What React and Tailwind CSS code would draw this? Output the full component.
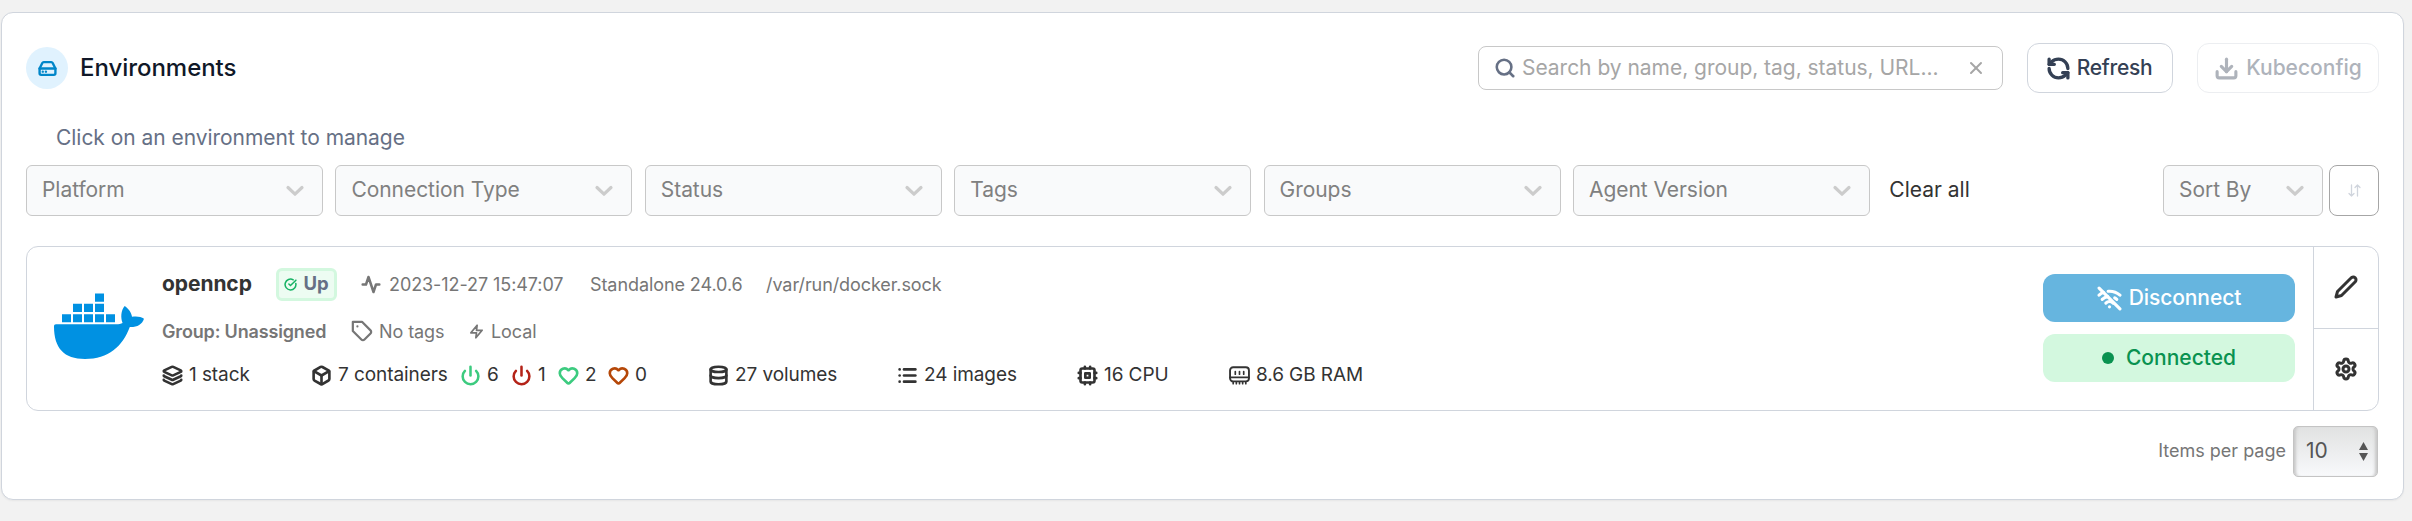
import {
  HardDrive, Search, X, RefreshCcw, Download, Layers, Box, Power, Heart,
  Database, List, WifiOff, Settings, CircleCheckBig,
} from "lucide-react";

function Filter({ label, className = "w-[297px]" }) {
  return (
    <div className={`flex h-[51px] items-center justify-between rounded-md border border-[#c8c8c8] bg-[#f9fafb] pl-[15px] pr-[17px] text-[21px] tracking-[-0.05px] text-[#808080] ${className}`}>
      <span className="relative -top-px">{label}</span>
      <svg className="h-[12px] w-[20px]" viewBox="0 0 20 12" fill="none" stroke="#ccc" strokeWidth="3.2" strokeLinecap="round" strokeLinejoin="round">
        <path d="M3 2.5 10 9.2 17 2.5" />
      </svg>
    </div>
  );
}

function DockerLogo() {
  return (
    <svg className="h-[66px] w-[90px]" viewBox="0 0 90 66" fill="#0091e2">
      <path d="M41 .5h9v8.2h-9zM19 10.8h9v8.2h-9zM30 10.8h9v8.2h-9zM41 10.8h9v8.2h-9zM8 21.2h9v8h-9zM19 21.2h9v8h-9zM30 21.2h9v8h-9zM41 21.2h9v8h-9zM52 21.2h9v8h-9z" />
      <path d="M2 31.3H62C65 31.3 67 30.8 68.600 30C66.500 24.500 66.800 17.500 70.700 13C74.500 15.500 77.500 19.500 78 23.800C82.500 23 87 23.600 90 25.700C88 31.500 83 34.300 75.800 34C68.500 53.500 54.500 66 31 66C10 66 0 55 0 33.500C0 32 .7 31.300 2 31.300Z" />
    </svg>
  );
}

// Line icon on a 24-unit grid, for shapes drawn by hand.
function Glyph({ className = "", strokeWidth, children }) {
  return (
    <svg className={`shrink-0 ${className}`} viewBox="0 0 24 24" fill="none" stroke="currentColor" strokeWidth={strokeWidth} strokeLinecap="round" strokeLinejoin="round">
      {children}
    </svg>
  );
}

function CpuIcon() {
  return (
    <Glyph className="h-[21px] w-[21px]" strokeWidth="3">
      <rect x="4" y="4" width="16" height="16" rx="2" />
      <rect x="9.500" y="9.500" width="5" height="5" />
      <path d="M15 2v2M15 20v2M2 15h2M2 9h2M20 15h2M20 9h2M9 2v2M9 20v2" />
    </Glyph>
  );
}

function RamIcon() {
  return (
    <svg className="h-[21px] w-[21px]" viewBox="0 0 20 20" fill="none" stroke="currentColor" strokeLinecap="round" strokeLinejoin="round">
      <rect x="1" y="2.200" width="18" height="13.400" rx="3" strokeWidth="1.800" />
      <path d="M1 11.800h18" strokeWidth="1.700" />
      <path d="M6 6.300v2.400M10 6.300v2.400M14 6.300v2.400" strokeWidth="1.600" />
      <path d="M4 16v1.800M7 16v1.800M10 16v1.800M13 16v1.800M16 16v1.800" strokeWidth="1.600" />
    </svg>
  );
}

function Stat({ icon, children, className = "" }) {
  return (
    <div className={`flex items-center gap-[6px] ${className}`}>
      {icon}
      <span className="whitespace-nowrap">{children}</span>
    </div>
  );
}

export default function App() {
  return (
    <div className="h-[521px] w-[2412px] bg-[#f2f2f2] pl-px pt-[12px] font-[Inter,sans-serif]">
      <section className="flex h-[488px] w-[2403px] flex-col rounded-xl border border-[#d0d5dd] bg-white pl-[24px] pr-[24px] shadow-xs">
        <header className="flex h-[110px] items-start pt-[30px]">
          <div className="mt-[4px] flex h-[42px] w-[42px] items-center justify-center rounded-full bg-[#e0f2fe] text-[#0086c9]">
            <HardDrive size={19} strokeWidth={3} />
          </div>
          <h1 className="ml-[12px] mt-[7px] text-[24px] font-medium leading-[36px] tracking-[-0.04px] text-[#101828]">Environments</h1>
          <div className="ml-auto mt-[3px] flex h-[44px] w-[525px] items-center rounded-lg border border-[#c8c8c8] pl-[15px] pr-[16px] text-[21px] text-[#a6a6a6]">
            <Search size={22} strokeWidth={2.800} className="mr-[6px] text-[#667085]" />
            <span className="tracking-[-0.03px]">Search by name, group, tag, status, URL...</span>
            <X size={20} strokeWidth={2.400} className="ml-auto" />
          </div>
          <button className="ml-[24px] flex h-[50px] w-[146px] items-center justify-center gap-[6px] rounded-xl border border-[#d0d5dd] pr-[2px] text-[21px] font-medium tracking-[-0.3px] text-[#344054]">
            <RefreshCcw size={25} strokeWidth={3.200} />
            Refresh
          </button>
          <button className="ml-[24px] flex h-[50px] w-[182px] items-center justify-center gap-[7px] rounded-xl border border-[#eceef1] text-[21px] font-medium text-[#aeb3bb]">
            <Download size={25} strokeWidth={3} />
            Kubeconfig
          </button>
        </header>
        <p className="h-[42px] pl-[30px] text-[21px] leading-[30px] tracking-[-0.04px] text-[#667085]">Click on an environment to manage</p>
        <div className="flex items-center gap-[12.400px]">
          <Filter label="Platform" />
          <Filter label="Connection Type" />
          <Filter label="Status" />
          <Filter label="Tags" />
          <Filter label="Groups" />
          <Filter label="Agent Version" />
          <span className="relative -top-px ml-[7px] text-[21px] text-[#333]">Clear all</span>
          <div className="ml-auto flex gap-[6px]">
            <Filter label="Sort By" className="w-[160px]" />
            <button className="flex h-[51px] w-[50px] items-center justify-center rounded-lg border border-[#a6a6a6] text-[#d0d5dd]">
              <svg className="h-[13px] w-[13px]" viewBox="0 0 13 13" fill="none" stroke="currentColor" strokeWidth="1.300" strokeLinecap="round" strokeLinejoin="round">
                <path d="M3.500 1v11M1 9.500 3.500 12 6 9.500M9.500 12V1M7 3.500 9.500 1 12 3.500" />
              </svg>
            </button>
          </div>
        </div>
        <div className="mt-[30px] flex h-[165px] shrink-0 overflow-hidden rounded-xl border border-[#d0d5dd]">
          <div className="flex flex-1">
            <div className="ml-[27px] mt-[46px] w-[90px]"><DockerLogo /></div>
            <div className="ml-[18px] flex flex-col text-[18px] tracking-[-0.08px] text-[#767676]">
              <div className="mt-[20px] flex h-[34px] items-center">
                <span className="w-[114px] text-[21px] font-bold text-[#333]">openncp</span>
                <span className="flex h-[33px] w-[61px] items-center justify-center gap-[6px] rounded-md border-[3px] border-[#d3f8df] bg-[#edfcf2] text-[18.500px] font-bold text-[#667085]">
                  <CircleCheckBig size={13} strokeWidth={2.800} className="text-[#16b364]" />
                  Up
                </span>
                <Glyph className="ml-[24px] mr-[8px] h-[21px] w-[20px]" strokeWidth="3">
                  <path d="M22 12h-4l-3 9L9 3l-3 9H2" />
                </Glyph>
                <span className="w-[201px]">2023-12-27 15:47:07</span>
                <span className="w-[176px]">Standalone 24.0.6</span>
                <span>/var/run/docker.sock</span>
              </div>
              <div className="mt-[13px] flex h-[34px] items-center">
                <span className="w-[189px] font-semibold tracking-[-0.16px]">Group: Unassigned</span>
                <Glyph className="mr-[6px] h-[22px] w-[22px]" strokeWidth="2.400">
                  <path d="M12 2H2v10l9.290 9.290c.94.94 2.480.94 3.420 0l6.580-6.580c.94-.94.94-2.480 0-3.420L12 2Z" />
                  <path d="M7 7h.01" />
                </Glyph>
                <span className="w-[90px]">No tags</span>
                <Glyph className="mr-[7px] h-[15px] w-[15px]" strokeWidth="2.800">
                  <path d="M13 2 3 14h9l-1 8 10-12h-9l1-8z" />
                </Glyph>
                <span>Local</span>
              </div>
              <div className="mt-[10px] flex h-[34px] items-center text-[19px] text-[#333]">
                <Stat className="w-[149px]" icon={<Layers size={21} strokeWidth={3} />}>1 stack</Stat>
                <Stat className="w-[149px]" icon={<Box size={21} strokeWidth={3} />}>7 containers</Stat>
                <Stat className="w-[51px]" icon={<Power size={21} strokeWidth={2.900} className="text-[#3ccb7f]" />}>6</Stat>
                <Stat className="w-[47px]" icon={<Power size={21} strokeWidth={2.900} className="text-[#b42318]" />}>1</Stat>
                <Stat className="w-[50px]" icon={<Heart size={21} strokeWidth={3} className="text-[#3ccb7f]" />}>2</Stat>
                <Stat className="w-[100px]" icon={<Heart size={21} strokeWidth={3} className="text-[#b54708]" />}>0</Stat>
                <Stat className="w-[189px]" icon={<Database size={21} strokeWidth={3} />}>27 volumes</Stat>
                <Stat className="w-[180px]" icon={<List size={21} strokeWidth={3} />}>24 images</Stat>
                <Stat className="w-[152px]" icon={<CpuIcon />}>16 CPU</Stat>
                <Stat icon={<RamIcon />}>8.6 GB RAM</Stat>
              </div>
            </div>
            <div className="ml-auto mr-[18px] mt-[27px] flex w-[252px] flex-col gap-[12px] text-[21px] font-medium">
              <button className="flex h-[48px] items-center justify-center gap-[7px] rounded-xl bg-[#66b5df] tracking-[-0.1px] text-white">
                <WifiOff size={25} strokeWidth={3} />
                Disconnect
              </button>
              <div className="flex h-[48px] items-center justify-center gap-[12px] rounded-xl bg-[#d3f8df] text-[#099250]">
                <span className="h-[12px] w-[12px] rounded-full bg-[#099250]" />
                Connected
              </div>
            </div>
          </div>
          <div className="flex w-[65px] flex-col border-l border-[#d0d5dd] text-[#333]">
            <div className="flex h-[82px] items-center justify-center border-b border-[#d0d5dd] pb-[2px]">
              <Glyph className="h-[24px] w-[24px]" strokeWidth="3">
                <path d="M17 3a2.850 2.830 0 1 1 4 4L7.500 20.500 2 22l1.500-5.500Z" />
              </Glyph>
            </div>
            <div className="flex flex-1 items-center justify-center pb-px"><Settings size={24} strokeWidth={3} /></div>
          </div>
        </div>
        <footer className="mt-[15px] flex items-center justify-end pr-px text-[18px] text-[#767676]">
          <span className="mr-[7px] pb-[3px]">Items per page</span>
          <div className="flex h-[51px] w-[85px] items-center justify-between rounded-[5px] border border-[#c4c4c4] bg-linear-to-b from-[#e1e2e2] to-[#f8f9fb] pl-[12px] pr-[9px] text-[21px] text-[#555] shadow-[inset_4px_0_3px_-2px_#c8c8c8,inset_-4px_0_3px_-2px_#c8c8c8]">
            <span className="pb-[2px]">10</span>
            <svg className="h-[19px] w-[9px]" viewBox="0 0 9 19" fill="#555"><path d="M0 8 4.500 0 9 8zM0 11h9L4.500 19z" /></svg>
          </div>
        </footer>
      </section>
    </div>
  );
}
